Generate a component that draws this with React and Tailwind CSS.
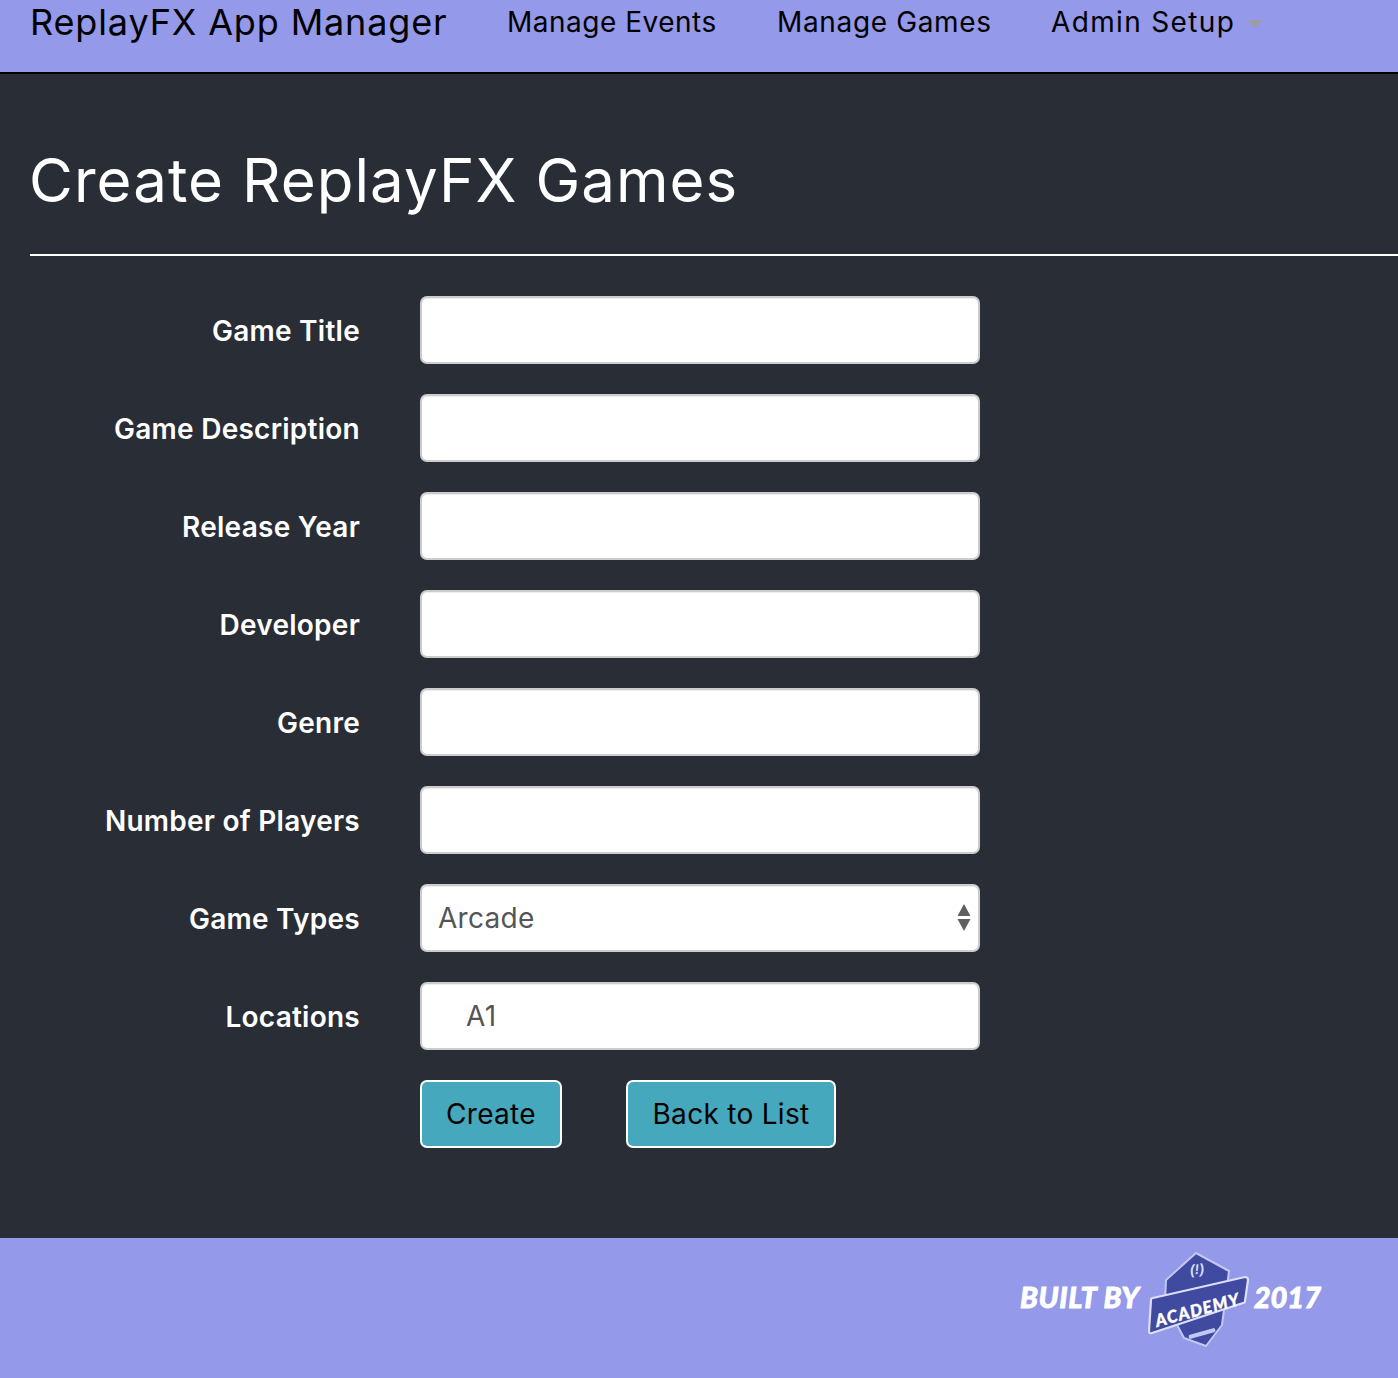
const FONT = "font-['Inter','Noto_Sans',sans-serif]";

function Logo() {
  return (
    <svg width="104" height="100" viewBox="0 0 104 100" className="shrink-0">
      <path d="M49 3 L19 30 L18 52 L37 88 L59 96 L75 75 L82 21 Z" fill="#3f4aa0" stroke="#c3c8f0" strokeWidth="2" strokeLinejoin="round" />
      <text x="50" y="24" fontSize="14" fontWeight="700" fill="#d8daf5" textAnchor="middle" fontFamily="Liberation Sans, sans-serif" transform="rotate(-6 50 20)">(!)</text>
      <path d="M6 48 L98 27 Q101 27 101 30 L98 51 Q98 53 96 53 L5 83 Q2 84 2 81 L4 50 Q4 48 6 48 Z" fill="#3f4aa0" stroke="#dcdff7" strokeWidth="2.2" strokeLinejoin="round" />
      <text x="50" y="66" fontSize="17" fontWeight="900" fontStyle="italic" fill="#ffffff" stroke="#ffffff" strokeWidth="0.4" textAnchor="middle" fontFamily="Lato, sans-serif" textLength="86" lengthAdjust="spacing" transform="rotate(-15 50 60)">ACADEMY</text>
      <path d="M42 85 L67 78 Q69 79 68 82 L43 89 Q41 88 42 85 Z" fill="#c3c8f0" />
    </svg>
  );
}

function Field({ label, children }) {
  return (
    <div className="flex items-center">
      <label className="w-[330px] h-[68px] pt-[1px] text-right text-[28px] leading-[68px] font-semibold tracking-[0.25px] text-white whitespace-nowrap">{label}</label>
      <div className="ml-[60px] w-[560px] relative">{children}</div>
    </div>
  );
}

const inputCls = "block w-full h-[68px] bg-white rounded-[7px] border-2 border-[#cccccc] text-[28px] tracking-[0.3px] text-[#555555] outline-none shadow-[inset_0_1px_1px_rgba(0,0,0,0.075)]";

function Btn({ children, w }) {
  return (
    <button className={"h-[68px] rounded-[7px] border-2 border-white bg-[#46a8bc] text-[28px] tracking-[0.3px] text-black " + w}>{children}</button>
  );
}

export default function App() {
  return (
    <div className={"min-h-[1378px] w-[1398px] flex flex-col bg-[#292d36] overflow-hidden " + FONT}>
      <nav className="h-[74px] shrink-0 border-b-2 border-black bg-[#9499e9] flex items-start text-black">
        <a className="ml-[30px] w-[416px] text-[36px] leading-[44px] tracking-[0.86px] whitespace-nowrap">ReplayFX App Manager</a>
        <a className="ml-[61px] w-[210px] text-[28px] leading-[44px] tracking-[0.5px] whitespace-nowrap">Manage Events</a>
        <a className="ml-[60px] w-[214px] text-[28px] leading-[44px] tracking-[0.65px] whitespace-nowrap">Manage Games</a>
        <a className="ml-[60px] flex items-center text-[28px] leading-[44px] tracking-[1.35px] whitespace-nowrap">
          Admin Setup
          <span className="ml-[12px] mt-[4px] w-0 h-0 border-x-[8px] border-x-transparent border-t-[8px] border-t-[#9c9ca8]" />
        </a>
      </nav>

      <main className="flex-1 pl-[30px]">
        <h1 className="mt-[70px] -ml-[1px] text-[60px] leading-[72px] font-normal text-white tracking-[1.05px] whitespace-nowrap">Create ReplayFX Games</h1>
        <hr className="mt-[38px] border-t-2 border-white" />
        <form className="mt-[40px] flex flex-col gap-[30px]">
          <Field label="Game Title"><input className={inputCls} /></Field>
          <Field label="Game Description"><input className={inputCls} /></Field>
          <Field label="Release Year"><input className={inputCls} /></Field>
          <Field label="Developer"><input className={inputCls} /></Field>
          <Field label="Genre"><input className={inputCls} /></Field>
          <Field label="Number of Players"><input className={inputCls} /></Field>
          <Field label="Game Types">
            <select defaultValue="Arcade" className={inputCls + " appearance-none pl-[16px]"}>
              <option>Arcade</option>
            </select>
            <svg width="14" height="27" viewBox="0 0 14 27" className="absolute right-[9px] top-[20px]">
              <path d="M7 0 L13.5 12 L0.5 12 Z M0.5 15 L13.5 15 L7 27 Z" fill="#5f5f5f" />
            </svg>
          </Field>
          <Field label="Locations"><input readOnly value="A1" className={inputCls + " pl-[44px]"} /></Field>
          <div className="flex ml-[390px] gap-[64px]">
            <Btn w="w-[142px]">Create</Btn>
            <Btn w="w-[210px]">Back to List</Btn>
          </div>
        </form>
      </main>

      <footer className="mt-[90px] h-[140px] shrink-0 bg-[#9499e9] flex items-start justify-end pr-[77px] pt-[12px] text-white text-[29px] leading-[94px] font-black italic [-webkit-text-stroke:0.8px_white] font-['Lato',sans-serif]">
        <span className="tracking-[0.6px]">BUILT BY</span>
        <span className="ml-[7px] mr-[3px] flex [-webkit-text-stroke:0]"><Logo /></span>
        <span>2017</span>
      </footer>
    </div>
  );
}
